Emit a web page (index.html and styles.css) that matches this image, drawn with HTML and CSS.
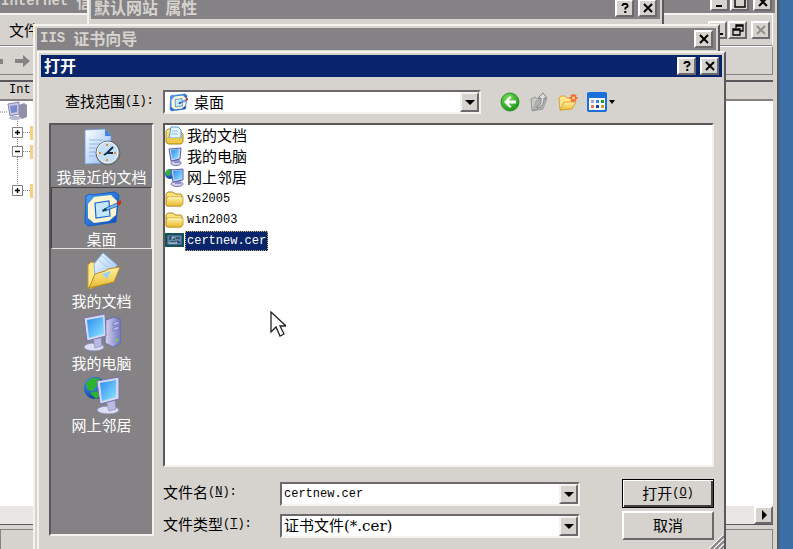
FILE: index.html
```html
<!DOCTYPE html>
<html lang="zh-CN">
<head>
  <meta charset="UTF-8" />
  <title>打开</title>
  <meta name="viewport" content="width=device-width, initial-scale=1" />
  <link rel="stylesheet" href="styles.css">
</head>
<body>
  <!-- shared icons -->
  <svg class="defs" aria-hidden="true">
    <defs>
      <linearGradient id="gScreen" x1="0" y1="0" x2="1" y2="1">
        <stop offset="0" stop-color="#2a8cf0"/><stop offset="1" stop-color="#8fe6ff"/>
      </linearGradient>
      <linearGradient id="gFolder" x1="0" y1="0" x2="0" y2="1">
        <stop offset="0" stop-color="#fff3a4"/><stop offset="1" stop-color="#e9b92f"/>
      </linearGradient>
      <linearGradient id="gPaper" x1="0" y1="0" x2="1" y2="1">
        <stop offset="0" stop-color="#ffffff"/><stop offset="1" stop-color="#8db8f4"/>
      </linearGradient>
      <linearGradient id="gBlue" x1="0" y1="0" x2="1" y2="1">
        <stop offset="0" stop-color="#4ba4f8"/><stop offset="1" stop-color="#0b48b8"/>
      </linearGradient>
      <linearGradient id="gCase" x1="0" y1="0" x2="1" y2="0">
        <stop offset="0" stop-color="#d6d6f2"/><stop offset="1" stop-color="#7474c0"/>
      </linearGradient>
      <radialGradient id="gGreen" cx="0.4" cy="0.3" r="0.8">
        <stop offset="0" stop-color="#7be05c"/><stop offset="1" stop-color="#0f8a10"/>
      </radialGradient>
      <radialGradient id="gGlobe" cx="0.35" cy="0.3" r="0.8">
        <stop offset="0" stop-color="#4aa8ff"/><stop offset="1" stop-color="#062c8c"/>
      </radialGradient>

      <symbol id="close" viewBox="0 0 12 12">
        <path d="M2 2l8 8M10 2l-8 8" fill="none" stroke="currentColor" stroke-width="2"/>
      </symbol>
      <symbol id="help" viewBox="0 0 12 12">
        <path d="M3.500 4V3l1-1h3l1 1v1.500L6.300 6.200V7.500" fill="none" stroke="currentColor" stroke-width="1.800"/>
        <path d="M5.300 9h2v2h-2z" fill="currentColor"/>
      </symbol>
      <symbol id="down" viewBox="0 0 12 12"><path d="M1 4h10L6 9z" fill="currentColor"/></symbol>

      <symbol id="desktop" viewBox="0 0 38 38">
        <path d="M3 6l4-2 2 1 23-3 4 3-3 27-28 4-3-3z" fill="url(#gBlue)" stroke="#1260cc"/>
        <path d="M11 7l17-2 6 6-1 14-7 6-15 2-6-5V14z" fill="#fff6cf"/>
        <path d="M12 13l14-2 1 15-14 2z" fill="#c5e6ff" stroke="#1768cf" stroke-width="1.200"/>
        <path d="M21 19l13-6 1 3-13 5z" fill="#7db8f2" stroke="#1659b0" stroke-width=".8"/>
        <path d="M19 20l4-2 1 2-4 2z" fill="#163a60"/>
        <path d="M34 12l4-2v4l-3 2z" fill="#d62d14"/>
      </symbol>
      <symbol id="recent" viewBox="0 0 38 38">
        <path d="M2 2l20-1 6 7v27l-26 1z" fill="url(#gPaper)" stroke="#6d9be0" stroke-width=".8"/>
        <path d="M22 1v7h6z" fill="#3d84e2"/>
        <path d="M6 12h14M6 16h11M6 20h8M6 24h8M6 28h8" stroke="#8fb8ef"/>
        <circle cx="25" cy="25" r="12" fill="#8d949c" stroke="#5e656e"/>
        <circle cx="24.500" cy="24.500" r="10.500" fill="#c4def5" stroke="#fff"/>
        <path d="M24 16v2M24 31v2M16 25h2M31 25h2" stroke="#f0812e" stroke-width="1.800"/>
        <path d="M30 19l-6 6h6M24 25l-3 2" fill="none" stroke="#12304c" stroke-width="2"/>
      </symbol>
      <symbol id="docs" viewBox="0 0 38 38">
        <path d="M5 13l3-3 5 1 2 3 12-1v15L7 37l-2-2z" fill="#ffe888" stroke="#c89722"/>
        <path d="M11 12L20 1l14 12-10 16-12-5z" fill="url(#gPaper)" stroke="#80b7ef"/>
        <path d="M19 4l9 8M16 8l10 9" stroke="#9fcbf6"/>
        <path d="M6 36l6-14 10-3 3-2 12-2-6 15z" fill="url(#gFolder)" stroke="#bd8c1c"/>
        <path d="M19 22l9-3-4 8z" fill="#9ccff5"/>
      </symbol>
      <symbol id="computer" viewBox="0 0 38 38">
        <path d="M23 6l8-3 7 3v23l-8 4-8-4z" fill="url(#gCase)" stroke="#6060a8" stroke-width=".8"/>
        <path d="M30 9l6-2v3l-6 2zM30 14l6-2v3l-6 2z" fill="#b6b6e4" stroke="#6666ae" stroke-width=".6"/>
        <circle cx="34" cy="26" r="1.300" fill="#5fe03c"/>
        <ellipse cx="11" cy="33" rx="10" ry="4" fill="#dedef2" stroke="#8c8cbe"/>
        <path d="M10 24l8-1 1 9-7 2z" fill="#b9b9e2" stroke="#8080b8" stroke-width=".6"/>
        <path d="M1 4l21-4 1 22-19 5z" fill="#d8d8f2" stroke="#7373b4"/>
        <path d="M4 6l16-3 1 17-15 4z" fill="url(#gScreen)"/>
      </symbol>
      <symbol id="network" viewBox="0 0 38 38">
        <circle cx="12" cy="12" r="11" fill="url(#gGlobe)"/>
        <path d="M3 7l6-5 8 1 2 4-6 3-3 5-5-1zM7 17l7-2 4 4-5 4z" fill="#2fb32c"/>
        <ellipse cx="25" cy="34" rx="11" ry="4" fill="#dedef2" stroke="#8c8cbe"/>
        <path d="M23 25l9-1 1 9-7 2z" fill="#b9b9e2" stroke="#8080b8" stroke-width=".6"/>
        <path d="M14 5l22-4v22l-19 5z" fill="#d8d8f2" stroke="#7373b4"/>
        <path d="M17 7l16-3v17l-14 4z" fill="url(#gScreen)"/>
      </symbol>

      <symbol id="docsSmall" viewBox="0 0 19 19">
        <path d="M1 5l2-2h3v3h10l2 2v8l-2 2H3l-2-2z" fill="url(#gFolder)" stroke="#b58a1c"/>
        <path d="M6 1h7l3 3v8H4z" fill="#e3f4ff" stroke="#5798d0"/>
        <path d="M7 5h6M6 8h7" stroke="#8ec1ea"/>
        <path d="M2 12h15v4l-2 1H3z" fill="#eccb4d"/>
      </symbol>
      <symbol id="computerSmall" viewBox="0 0 19 19">
        <ellipse cx="11" cy="16" rx="5" ry="2.500" fill="#cfcfe8" stroke="#7777ac"/>
        <path d="M9 12h5l1 4H9z" fill="#8e8ed0"/>
        <path d="M4 2l12-1-1 11-9 2z" fill="#d5d5f2" stroke="#5858aa"/>
        <path d="M6 3l8-1-1 9-6 1z" fill="url(#gScreen)"/>
      </symbol>
      <symbol id="networkSmall" viewBox="0 0 19 19">
        <circle cx="5" cy="6" r="5" fill="url(#gGlobe)"/>
        <path d="M1 3l4-2 3 2-3 2-1 3-3-1z" fill="#2fb32c"/>
        <ellipse cx="12" cy="16" rx="6" ry="2.500" fill="#cfcfe8" stroke="#7777ac"/>
        <path d="M10 12h5l1 4h-6z" fill="#8e8ed0"/>
        <path d="M6 2l12-1v11l-10 2z" fill="#d5d5f2" stroke="#5858aa"/>
        <path d="M8 3l9-1v9l-8 1z" fill="url(#gScreen)"/>
      </symbol>
      <symbol id="folder" viewBox="0 0 19 19">
        <path d="M1 5l2-2h5l2 2h6l1 2v9l-1 1H2l-1-1z" fill="#fbe27a" stroke="#b58a1c"/>
        <path d="M2 8h16v7l-2 2H3l-2-2z" fill="url(#gFolder)" stroke="#c79b27" stroke-width=".8"/>
        <path d="M3 9h13" stroke="#fffbd0"/>
      </symbol>
      <symbol id="cert" viewBox="0 0 19 19">
        <path d="M0 2h19v14H0z" fill="#12594f"/>
        <path d="M2 4h15v10H2z" fill="#6189a4" stroke="#1f3e6d" stroke-width=".8"/>
        <path d="M4 6h3M5 7v2M8 8h2M11 7h4M5 11h6M12 10l3 2" stroke="#152c4c" stroke-width="1.200"/>
        <path d="M7 6l2 1M4 12h8" stroke="#c7d8df"/>
      </symbol>
    </defs>
  </svg>

  <!-- management console -->
  <div class="window console">
    <div class="titlebar inactive">
      <span class="title"><span class="latin">Internet</span> 信息服务</span>
      <div class="controls">
        <button type="button" class="tool" aria-label="最小化"><svg viewBox="0 0 12 12"><path d="M2 9h6v2H2z" fill="currentColor"/></svg></button>
        <button type="button" class="tool" aria-label="最大化"><svg viewBox="0 0 12 12"><path d="M1 2h10v9H1zM1 3h10" fill="none" stroke="currentColor" stroke-width="1.400"/></svg></button>
        <button type="button" class="tool spaced" aria-label="关闭"><svg><use href="#close"/></svg></button>
      </div>
    </div>
    <div class="menubar">
      <span>文件</span>
      <div class="controls">
        <button type="button" class="tool" aria-label="最小化子窗口"><svg viewBox="0 0 12 12"><path d="M5 9h6v2H5z" fill="currentColor"/></svg></button>
        <button type="button" class="tool" aria-label="还原"><svg viewBox="0 0 12 12"><path d="M4 4V1h7v6H8M4 2h7M1 5h7v6H1zM1 6h7" fill="none" stroke="currentColor" stroke-width="1.300"/></svg></button>
        <button type="button" class="tool spaced" aria-label="关闭子窗口" disabled><svg><use href="#close"/></svg></button>
      </div>
    </div>
    <div class="navbar">
      <svg viewBox="0 0 32 14"><path d="M0 5h3v5H0zM15 5h8V1l7 6-7 6V9h-8z" fill="#848284"/></svg>
    </div>
    <div class="panes">
      <div class="colhead"><span class="latin">Int</span></div>
      <div class="tree">
        <svg viewBox="0 0 34 100">
          <path d="M0 11h8M17.500 20v70M17 31.500h13M17 50.500h13M17 89.500h13" fill="none" stroke="#848284" stroke-dasharray="1 1"/>
          <path d="M8 3l11-2v12l-9 2z" fill="#c8c8e4" stroke="#8585b4"/><path d="M10 5l7-1v7l-6 1z" fill="#7b8ad0"/>
          <path d="M19 4l5-2 3 2v12l-5 2-3-2z" fill="#8f8fa8"/><ellipse cx="15" cy="17" rx="6" ry="2" fill="#b9b9d0"/>
          <path d="M12.500 26.500h10v10h-10zM12.500 45.500h10v10h-10zM12.500 84.500h10v10h-10z" fill="#fff" stroke="#848284"/>
          <path d="M15 31.500h5M17.500 29v5M15 50.500h5M15 89.500h5M17.500 87v5" stroke="#000" stroke-width="1.400"/>
          <path d="M30 25h4v14h-4zM30 44h4v14h-4zM30 83h4v14h-4z" fill="#f7cf86"/>
        </svg>
      </div>
      <div class="hscroll">
        <button type="button" class="tool" aria-label="向右滚动"><svg viewBox="0 0 12 12"><path d="M4 1l5 5-5 5z" fill="currentColor"/></svg></button>
      </div>
    </div>
    <div class="status"></div>
  </div>

  <!-- site properties -->
  <div class="window properties">
    <div class="titlebar inactive">
      <span class="title">默认网站&nbsp; 属性</span>
      <div class="controls">
        <button type="button" class="tool" aria-label="帮助"><svg><use href="#help"/></svg></button>
        <button type="button" class="tool spaced" aria-label="关闭"><svg><use href="#close"/></svg></button>
      </div>
    </div>
  </div>

  <!-- certificate wizard -->
  <div class="window wizard">
    <div class="titlebar inactive">
      <span class="title"><span class="latin">IIS</span> 证书向导</span>
      <div class="controls">
        <button type="button" class="tool" aria-label="关闭"><svg><use href="#close"/></svg></button>
      </div>
    </div>
  </div>

  <!-- open file dialog -->
  <div class="window dialog" role="dialog" aria-label="打开">
    <div class="titlebar">
      <span class="title">打开</span>
      <div class="controls">
        <button type="button" class="tool" aria-label="帮助"><svg><use href="#help"/></svg></button>
        <button type="button" class="tool spaced" aria-label="关闭"><svg><use href="#close"/></svg></button>
      </div>
    </div>
    <form class="content">
      <div class="lookin">
        <label for="lookin">查找范围<span class="latin">(<u>I</u>):</span></label>
        <div class="combo">
          <svg class="small-icon"><use href="#desktop"/></svg>
          <select id="lookin"><option>桌面</option></select>
          <span class="arrow"><svg><use href="#down"/></svg></span>
        </div>
        <div class="actions">
          <button type="button" aria-label="后退">
            <svg viewBox="0 0 20 20"><circle cx="10" cy="10" r="9" fill="url(#gGreen)" stroke="#2c9827"/><path d="M10 4L4 10l6 6 1.500-1.500L8.500 11.500H16v-3H8.500l3-3z" fill="#fff"/></svg>
          </button>
          <button type="button" aria-label="向上一级" disabled>
            <svg viewBox="0 0 20 20"><path d="M2 7l4-2 2 2 7-1-2 11-10 2z" fill="#c8c8c8" stroke="#969696"/><path d="M4 18l3-9 11-2-4 10z" fill="#b2b2b2" stroke="#999" stroke-width=".7"/><path d="M8 14c4 0 4-3 4-8H9l5-5 4 5h-3c0 6-2 9-7 10z" fill="#dedede" stroke="#828282"/></svg>
          </button>
          <button type="button" aria-label="新建文件夹">
            <svg viewBox="0 0 20 20"><path d="M1 6l2-2h4l2 2h5v10L2 18z" fill="#ffe789" stroke="#d5a23a"/><path d="M2 18l4-8h12l-4 7z" fill="url(#gFolder)" stroke="#d5a23a"/><path d="M15.500 2v8M11.500 6h8M13 3l5 6M18 3l-5 6" stroke="#f4672e" stroke-width="1.800"/><circle cx="15.500" cy="6" r="1.500" fill="#ffe27a"/></svg>
          </button>
          <button type="button" aria-label="查看菜单">
            <svg viewBox="0 0 20 20"><rect x="1" y="1" width="18" height="18" rx="1" fill="#fff" stroke="#1b6fd8" stroke-width="2"/><path d="M0 1h20v5H0z" fill="#1b6fd8"/><path d="M4 8h3v3H4z" fill="#a8a0d8"/><path d="M9 8h3v3H9z" fill="#2b80e8"/><path d="M14 8h3v3h-3z" fill="#1ca02a"/><path d="M4 13h3v3H4z" fill="#f07a56"/><path d="M9 13h3v3H9z" fill="#1a3fa8"/><path d="M14 13h3v3h-3z" fill="#c9a02a"/></svg>
            <svg class="caret" viewBox="0 0 8 8"><path d="M1 2h6L4 6z"/></svg>
          </button>
        </div>
      </div>

      <nav class="places">
        <button type="button"><svg><use href="#recent"/></svg>我最近的文档</button>
        <button type="button" class="pressed"><svg><use href="#desktop"/></svg>桌面</button>
        <button type="button"><svg><use href="#docs"/></svg>我的文档</button>
        <button type="button"><svg><use href="#computer"/></svg>我的电脑</button>
        <button type="button"><svg><use href="#network"/></svg>网上邻居</button>
      </nav>

      <ul class="files">
        <li><svg class="small-icon"><use href="#docsSmall"/></svg><span>我的文档</span></li>
        <li><svg class="small-icon"><use href="#computerSmall"/></svg><span>我的电脑</span></li>
        <li><svg class="small-icon"><use href="#networkSmall"/></svg><span>网上邻居</span></li>
        <li><svg class="small-icon"><use href="#folder"/></svg><span class="latin">vs2005</span></li>
        <li><svg class="small-icon"><use href="#folder"/></svg><span class="latin">win2003</span></li>
        <li class="selected"><svg class="small-icon"><use href="#cert"/></svg><span class="latin">certnew.cer</span></li>
      </ul>

      <div class="fields">
        <label for="filename">文件名<span class="latin">(<u>N</u>):</span></label>
        <div class="combo">
          <input id="filename" class="latin" type="text" value="certnew.cer">
          <span class="arrow"><svg><use href="#down"/></svg></span>
        </div>
        <button type="submit" class="push default">打开<span class="latin">(<u>O</u>)</span></button>
        <label for="filetype">文件类型<span class="latin">(<u>T</u>):</span></label>
        <div class="combo">
          <select id="filetype"><option>证书文件(*.cer)</option></select>
          <span class="arrow"><svg><use href="#down"/></svg></span>
        </div>
        <button type="button" class="push">取消</button>
      </div>
    </form>
    <svg class="grip" viewBox="0 0 16 16"><path d="M1 16L16 1M6 16L16 6M11 16l5-5" stroke="#848284" stroke-width="2"/><path d="M0 15L15 0M5 15L16 4M10 15l6-6" stroke="#fff"/></svg>
  </div>

  <svg class="pointer" viewBox="0 0 16 27"><path d="M1 1v20l5-5 4 9 4-2-4-8h6z" fill="#fff" stroke="#222" stroke-width="1.300"/></svg>
</body>
</html>
```
FILE: styles.css
```css
* {
  box-sizing: border-box;
}
body {
  margin: 0;
  height: 100vh;
  position: relative;
  overflow: hidden;
  background-color: #3a6ea5;
  font-family: "Noto Sans CJK SC", sans-serif;
  font-size: 15px;
  line-height: 18px;
  color: #000;
}
button, input, select {
  font: inherit;
  color: inherit;
  border-radius: 0;
  margin: 0;
  padding: 0;
}
svg {
  display: block;
  flex: none;
}
.defs {
  position: absolute;
  width: 0;
  height: 0;
}
.latin {
  font-family: "Liberation Mono", monospace;
  font-size: 12px;
}

/* windows */
.window {
  position: absolute;
  display: flex;
  flex-direction: column;
  padding: 2px;
  background-color: #d6d3ce;
  border: 2px solid;
  border-color: #f4f2ee #5a585a #5a585a #f4f2ee;
}
.console {
  top: -13px;
  left: -6px;
  right: 14px;
  bottom: -8px;
}
.properties {
  top: -7px;
  left: 87px;
  right: 129px;
  bottom: -8px;
}
.wizard {
  top: 24px;
  left: 33px;
  right: 73px;
  bottom: -8px;
}
.dialog {
  top: 51px;
  left: 37px;
  right: 67px;
  bottom: -4px;
}
.titlebar {
  display: flex;
  align-items: center;
  justify-content: space-between;
  flex: none;
  height: 22px;
  padding: 0 3px;
  background-color: #08246b;
  color: #fff;
}
.titlebar.inactive {
  background-color: #848284;
  color: #d6d3ce;
}
.title {
  display: flex;
  align-items: center;
  gap: 8px;
  padding-bottom: 2px;
  font-size: 16px;
  font-weight: bold;
  white-space: nowrap;
}
.title .latin {
  font-size: 14px;
}
.controls {
  display: flex;
  gap: 1px;
}
.spaced {
  margin-left: 3px;
}
.tool {
  display: flex;
  align-items: center;
  justify-content: center;
  width: 19px;
  height: 18px;
  background-color: #d6d3ce;
  border: 2px solid;
  border-color: #fff #6b696b #6b696b #fff;
  color: #000;
}
.tool svg {
  width: 12px;
  height: 12px;
}
.tool:disabled {
  color: #948f8c;
}

/* console */
.menubar {
  display: flex;
  align-items: center;
  justify-content: space-between;
  flex: none;
  height: 33px;
  margin: 0 2px;
  padding: 0 2px 0 9px;
  border-top: 2px solid #f4f2ee;
  border-right: 1px solid #fff;
  border-bottom: 1px solid #848284;
}
.navbar {
  display: flex;
  align-items: center;
  flex: none;
  height: 29px;
  margin: 0 2px;
  border-top: 1px solid #fff;
  border-right: 1px solid #848284;
  border-bottom: 1px solid #848284;
}
.navbar svg {
  width: 32px;
  height: 14px;
}
.panes {
  display: flex;
  flex-direction: column;
  flex: 1;
  margin: 5px 2px 4px;
  background-color: #fff;
  border-top: 2px solid #5a585a;
  border-bottom: 1px solid #5a585a;
}
.colhead {
  height: 19px;
  padding-left: 9px;
  background-color: #d6d3ce;
  border-bottom: 2px solid #848284;
}
.colhead .latin {
  display: block;
  line-height: 17px;
}
.tree {
  flex: 1;
}
.tree svg {
  width: 34px;
  height: 100px;
}
.hscroll {
  display: flex;
  justify-content: flex-end;
  background-color: #e9e7e4;
}
.status {
  flex: none;
  height: 24px;
  margin: 0 2px;
  border: 1px solid #848284;
}

/* dialog */
.content {
  display: grid;
  grid-template-columns: 105px 1fr;
  grid-template-rows: 24px 1fr 61px;
  flex: 1;
  column-gap: 9px;
  padding: 13px 8px 9px;
}
.lookin {
  grid-column: 1 / 3;
  display: flex;
  align-items: center;
}
label {
  display: flex;
  align-items: center;
  padding-bottom: 3px;
}
.lookin label {
  width: 114px;
  padding-left: 16px;
  flex: none;
}
.combo {
  display: flex;
  align-items: center;
  flex: 1;
  height: 24px;
  background-color: #fff;
  border: 2px solid;
  border-color: #6b696b #f4f2ee #f4f2ee #6b696b;
}
.lookin .combo {
  flex: none;
  width: 58%;
  max-width: 318px;
  padding-left: 4px;
}
.combo select, .combo input {
  flex: 1;
  min-width: 0;
  height: 20px;
  padding: 0 2px;
  background: none;
  border: 0;
  outline: 0;
  appearance: none;
}
.combo .latin {
  font-family: "Liberation Mono", monospace;
  font-size: 12px;
}
.lookin select {
  padding-left: 6px;
}
#filetype {
  font-family: "DejaVu Serif", "Noto Sans CJK SC", serif;
}
.arrow {
  display: flex;
  align-items: center;
  justify-content: center;
  flex: none;
  width: 19px;
  height: 20px;
  background-color: #d6d3ce;
  border: 2px solid;
  border-color: #f4f2ee #6b696b #6b696b #f4f2ee;
}
.arrow svg {
  width: 12px;
  height: 12px;
}
.small-icon {
  width: 19px;
  height: 19px;
}
.actions {
  display: flex;
  gap: 9px;
  margin-left: 19px;
}
.actions button {
  display: flex;
  align-items: center;
  gap: 1px;
  background: none;
  border: 0;
}
.actions svg {
  width: 20px;
  height: 20px;
}
.actions .caret {
  width: 8px;
  height: 8px;
}

.places {
  grid-row: 2 / 4;
  display: flex;
  flex-direction: column;
  margin: 9px 0 4px;
  background-color: #848284;
  border: 2px solid;
  border-color: #5a585a #f4f2ee #f4f2ee #5a585a;
}
.places button {
  display: flex;
  flex-direction: column;
  align-items: center;
  gap: 2px;
  height: 62px;
  padding-top: 2px;
  background: none;
  border: 1px solid transparent;
  color: #fff;
  white-space: nowrap;
}
.places .pressed {
  border-color: #424142 #e6e3de #e6e3de #424142;
}
.places svg {
  width: 38px;
  height: 38px;
}

.files {
  margin: 9px 0 12px;
  padding: 0;
  list-style: none;
  background-color: #fff;
  border: 2px solid;
  border-color: #5a585a #f4f2ee #f4f2ee #5a585a;
}
.files li {
  display: flex;
  align-items: center;
  gap: 1px;
  height: 21px;
}
.files span {
  padding: 0 2px 2px;
}
.files .latin {
  padding: 1px 2px;
}
.files .selected span {
  background-color: #08246b;
  color: #fff;
  outline: 1px dotted #c9b36a;
  outline-offset: -1px;
}

.fields {
  display: grid;
  grid-template-columns: 108px 1fr 92px;
  column-gap: 9px;
  row-gap: 3px;
  align-content: start;
}
.fields .combo {
  align-self: center;
  margin-right: 33px;
}
.push {
  display: flex;
  align-items: center;
  justify-content: center;
  height: 29px;
  padding-bottom: 2px;
  background-color: #d6d3ce;
  border: 2px solid;
  border-color: #fff #6b696b #6b696b #fff;
}
.push.default {
  border: 1px solid #000;
  box-shadow: inset 1px 1px #fff, inset -2px -2px #424142;
}
.grip {
  position: absolute;
  right: 0;
  bottom: 0;
  width: 16px;
  height: 16px;
}

.pointer {
  position: absolute;
  left: 270px;
  top: 311px;
  width: 16px;
  height: 27px;
}
```
